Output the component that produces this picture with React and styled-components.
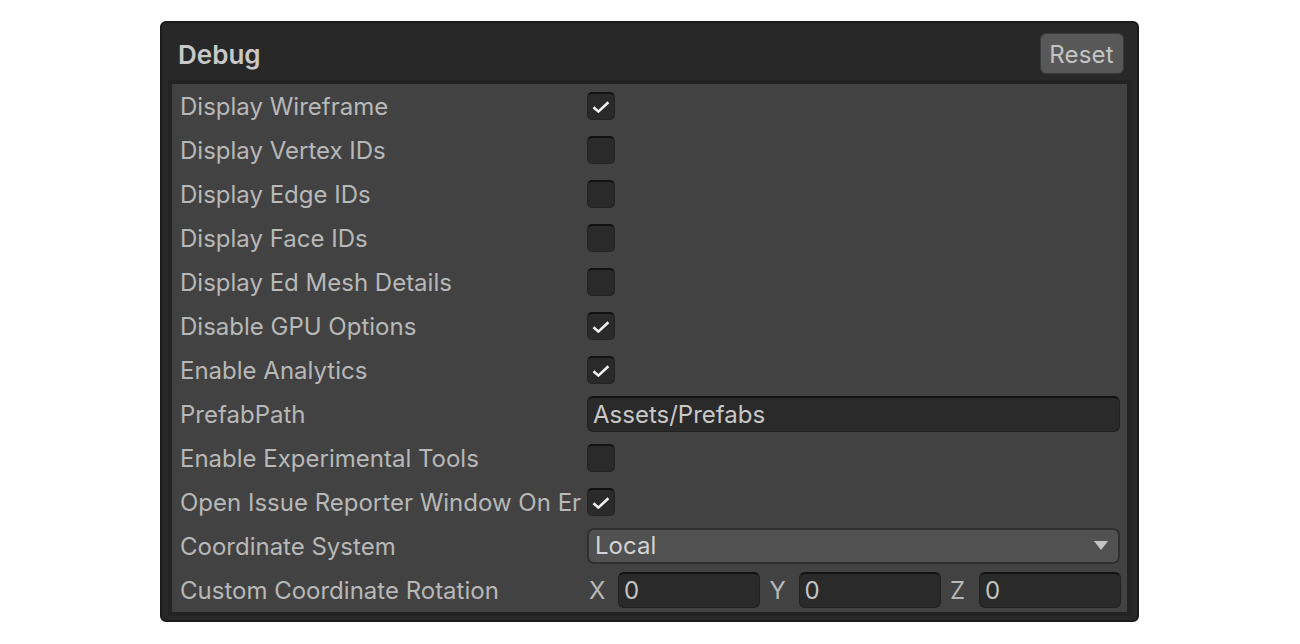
import React from "react";
import styled, { createGlobalStyle } from "styled-components";

const GlobalStyle = createGlobalStyle`
  html, body {
    margin: 0;
    padding: 0;
    background: #ffffff;
    font-family: Inter, "Liberation Sans", sans-serif;
  }
`;

const Page = styled.div`
  width: 1300px;
  height: 644px;
  box-sizing: border-box;
  padding: 21px 0 0 160px;
  overflow: hidden;
`;

const Panel = styled.section`
  width: 979px;
  height: 601px;
  box-sizing: border-box;
  display: flex;
  flex-direction: column;
  background: #282828;
  border: 2px solid #1a1a1a;
  border-radius: 6px;
`;

const Header = styled.header`
  height: 61px;
  flex: none;
  box-sizing: border-box;
  display: flex;
  align-items: center;
  justify-content: space-between;
  padding: 2px 13px 2px 16px;
`;

const Title = styled.h1`
  margin: 1px 0 0;
  font-size: 26px;
  font-weight: 600;
  color: #c8c8c8;
`;

const ResetButton = styled.button`
  width: 84px;
  height: 41px;
  box-sizing: border-box;
  padding: 1px 1px 0 0;
  border: 1px solid #3a3a3a;
  border-radius: 6px;
  background: #585858;
  color: #c4c4c4;
  font: 400 24px Inter, sans-serif;
  letter-spacing: 0.2px;
`;

const Body = styled.div`
  margin: 0 10px 8px;
  flex: 1;
  display: flex;
  flex-direction: column;
  background: #424242;
  box-shadow: 0 0 0 4px #232323;
`;

const Row = styled.div`
  height: 44px;
  flex: none;
  display: flex;
  align-items: center;
  padding-left: 8px;
`;

const Label = styled.span`
  width: 401px;
  flex: none;
  white-space: nowrap;
  overflow: hidden;
  font-size: 24px;
  color: #b8b8b8;
`;

const Checkbox = styled.span`
  width: 28px;
  height: 28px;
  margin-left: 6px;
  box-sizing: border-box;
  display: flex;
  align-items: center;
  justify-content: center;
  background: #2a2a2a;
  border: 1px solid #232323;
  border-top: 2px solid #111111;
  border-radius: 5px;
`;

const TextField = styled.div`
  width: 533px;
  height: 36px;
  margin-left: 6px;
  box-sizing: border-box;
  display: flex;
  align-items: center;
  padding-left: 5px;
  background: #2a2a2a;
  border: 1px solid #212121;
  border-top: 2px solid #111111;
  border-radius: 6px;
  font-size: 24px;
  color: #c8c8c8;
`;

const Dropdown = styled.div`
  width: 533px;
  height: 36px;
  margin-left: 6px;
  box-sizing: border-box;
  display: flex;
  align-items: center;
  justify-content: space-between;
  padding: 0 10px 2px 6px;
  background: #515151;
  border: 2px solid #303030;
  border-radius: 7px;
  font-size: 24px;
  color: #d2d2d2;
`;

const Vector = styled.div`
  display: flex;
  align-items: center;
  margin-left: 6px;
`;

const Axis = styled.span`
  width: 31px;
  flex: none;
  box-sizing: border-box;
  padding-left: 2px;
  font-size: 24px;
  color: #b8b8b8;
`;

const NumberField = styled.div`
  width: 142px;
  height: 36px;
  margin-right: 7.5px;
  box-sizing: border-box;
  display: flex;
  align-items: center;
  padding-left: 5px;
  background: #2a2a2a;
  border: 1px solid #212121;
  border-top: 2px solid #111111;
  border-radius: 6px;
  font-size: 24px;
  color: #c4c4c4;
`;

const CheckMark = () => (
  <svg width="18" height="14" viewBox="0 0 18 14" fill="none">
    <path d="M1.5 7.2 L6.4 11.6 L16.4 2.2" stroke="#f0f0f0" strokeWidth="2.6" />
  </svg>
);

const Caret = () => (
  <svg width="14" height="9" viewBox="0 0 14 9">
    <path d="M0 0 H14 L7 9 Z" fill="#c4c4c4" />
  </svg>
);

const rows = [
  ["Display Wireframe", true],
  ["Display Vertex IDs", false],
  ["Display Edge IDs", false],
  ["Display Face IDs", false],
  ["Display Ed Mesh Details", false],
  ["Disable GPU Options", true],
  ["Enable Analytics", true],
];

const CheckRow = ({ label, checked }) => (
  <Row>
    <Label>{label}</Label>
    <Checkbox>{checked && <CheckMark />}</Checkbox>
  </Row>
);

export default function App() {
  return (
    <Page>
      <GlobalStyle />
      <Panel>
        <Header>
          <Title>Debug</Title>
          <ResetButton>Reset</ResetButton>
        </Header>
        <Body>
          {rows.map(([label, checked]) => (
            <CheckRow key={label} label={label} checked={checked} />
          ))}
          <Row>
            <Label>PrefabPath</Label>
            <TextField>Assets/Prefabs</TextField>
          </Row>
          <CheckRow label="Enable Experimental Tools" checked={false} />
          <CheckRow label="Open Issue Reporter Window On Error" checked />
          <Row>
            <Label>Coordinate System</Label>
            <Dropdown>
              Local
              <Caret />
            </Dropdown>
          </Row>
          <Row>
            <Label>Custom Coordinate Rotation</Label>
            <Vector>
              {["X", "Y", "Z"].map((axis) => (
                <React.Fragment key={axis}>
                  <Axis>{axis}</Axis>
                  <NumberField>0</NumberField>
                </React.Fragment>
              ))}
            </Vector>
          </Row>
        </Body>
      </Panel>
    </Page>
  );
}
